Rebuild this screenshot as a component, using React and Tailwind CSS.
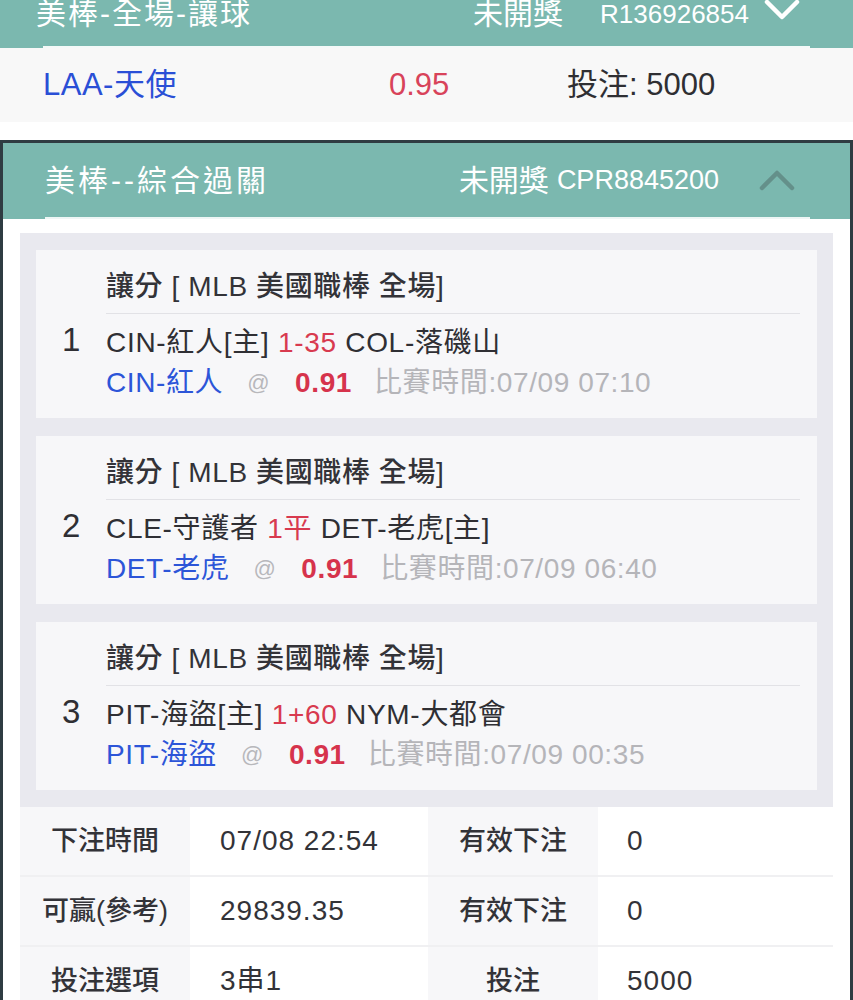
import React from 'react'

const font = "font-['Liberation_Sans','Noto_Sans_CJK_TC',sans-serif]"

const legs = [
  {
    no: '1',
    home: 'CIN-紅人[主]',
    line: '1-35',
    away: 'COL-落磯山',
    pick: 'CIN-紅人',
    time: '07/09 07:10',
  },
  {
    no: '2',
    home: 'CLE-守護者',
    line: '1平',
    away: 'DET-老虎[主]',
    pick: 'DET-老虎',
    time: '07/09 06:40',
  },
  {
    no: '3',
    home: 'PIT-海盜[主]',
    line: '1+60',
    away: 'NYM-大都會',
    pick: 'PIT-海盜',
    time: '07/09 00:35',
  },
]

const rows = [
  ['下注時間', '07/08 22:54', '有效下注', '0'],
  ['可贏(參考)', '29839.35', '有效下注', '0'],
  ['投注選項', '3串1', '投注', '5000'],
]

const Chevron = ({ up, color }) => (
  <svg width="36" height="22" viewBox="0 0 36 22" fill="none">
    <polyline
      points={up ? '3,19 18,4 33,19' : '3,3 18,18 33,3'}
      stroke={color}
      strokeWidth="4.5"
      strokeLinecap="round"
      strokeLinejoin="round"
    />
  </svg>
)

const LegCard = ({ leg }) => (
  <div className="bg-[#f7f7f9] pt-[17px] pb-[15px]">
    <div className="ml-[70px] text-[28px] tracking-[0.6px] leading-[40px] font-medium text-[#333338]">讓分 [ MLB 美國職棒 全場]</div>
    <div className="ml-[70px] mr-[17px] mt-[6px] h-px bg-[#e2e2e6]" />
    <div className="flex mt-[9px]">
      <div className="w-[70px] pl-[26px] text-[33px] leading-[34px] text-[#2f2f34]">{leg.no}</div>
      <div className="flex flex-col">
        <div className="text-[28px] tracking-[0.7px] leading-[40px] text-[#2f2f34]">
          {leg.home} <span className="text-[#d83a4f]">{leg.line}</span> {leg.away}
        </div>
        <div className="flex items-center text-[28px] tracking-[0.6px] leading-[40px]">
          <span className="text-[#2c55d8]">{leg.pick}</span>
          <span className="ml-[24px] text-[22px] text-[#b8b8bc]">@</span>
          <span className="ml-[25px] font-bold text-[#d6334c]">0.91</span>
          <span className="ml-[22px] text-[#b5b5b9]">比賽時間:{leg.time}</span>
        </div>
      </div>
    </div>
  </div>
)

export default function App() {
  return (
    <div className={`${font} w-[853px] bg-white`}>
      {/* previous bet (cut off at top) */}
      <div className="bg-[#7bb8af]">
        <div className="flex items-start justify-between h-[46px] pl-[36px] pr-[53px] text-white">
          <div className="text-[30px] tracking-[2px] leading-[28px]">美棒-全場-讓球</div>
          <div className="flex items-start">
            <span className="text-[30px] leading-[28px]">未開獎</span>
            <span className="ml-[37px] text-[26px] leading-[28px]">R136926854</span>
            <span className="ml-[15px] -mt-[1px]"><Chevron color="#ffffff" /></span>
          </div>
        </div>
        <div className="px-[43px]">
          <div className="h-[2px] bg-[#f4f9f8] mr-[0px] w-[767px]" />
        </div>
      </div>
      <div className="flex items-center h-[74px] pl-[43px] bg-[#f8f8f8] text-[31px]">
        <div className="w-[346px] tracking-[0.5px] text-[#2a4fd6]">LAA-天使</div>
        <div className="w-[178px] text-[#d8435a]">0.95</div>
        <div className="text-[#2f2f33]">投注: 5000</div>
      </div>
      <div className="h-[18px]" />

      {/* parlay bet */}
      <div className="border-[3px] border-b-0 border-[#2f3c42]">
        <div className="flex items-center justify-between h-[74px] pl-[42px] pr-[55px] bg-[#7bb8af] text-white">
          <div className="text-[30px] tracking-[3px]">美棒--綜合過關</div>
          <div className="flex items-center">
            <span className="text-[30px]">未開獎</span>
            <span className="ml-[8px] text-[27px]">CPR8845200</span>
            <span className="ml-[40px]"><Chevron up color="#64908a" /></span>
          </div>
        </div>
        <div className="h-[2px] bg-[#7bb8af]">
          <div className="ml-[42px] mr-[40px] h-[2px] bg-[#eef6f5]" />
        </div>
        <div className="bg-white px-[17px] pt-[14px]">
          <div className="bg-[#e9e9ef] px-[16px] pt-[17px] pb-[17px] flex flex-col gap-[18px]">
            {legs.map((leg) => (
              <LegCard key={leg.no} leg={leg} />
            ))}
          </div>
          <div className="text-[27px]">
            {rows.map((r, i) => (
              <div key={i} className="grid grid-cols-[170px_238px_170px_1fr] h-[70px] border-b-2 border-[#f0f0f2]">
                <div className="flex items-center justify-center bg-[#f7f7f9] font-medium text-[#333338]">{r[0]}</div>
                <div className="flex items-center pl-[30px] text-[28px] tracking-[1px] text-[#333338]">{r[1]}</div>
                <div className="flex items-center justify-center bg-[#f7f7f9] font-medium text-[#333338]">{r[2]}</div>
                <div className="flex items-center pl-[29px] text-[28px] tracking-[1px] text-[#333338]">{r[3]}</div>
              </div>
            ))}
          </div>
        </div>
      </div>
    </div>
  )
}
